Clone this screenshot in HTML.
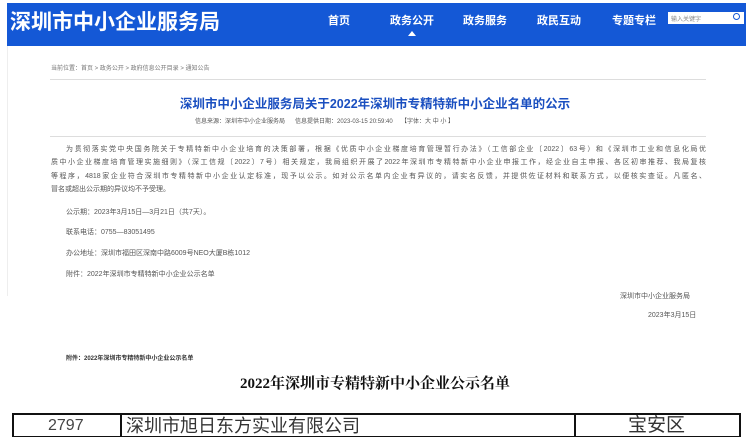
<!DOCTYPE html>
<html><head><meta charset="utf-8"><style>
*{margin:0;padding:0;box-sizing:border-box}
body{width:750px;height:441px;background:#fff;position:relative;overflow:hidden;font-family:"Liberation Sans","Noto Sans CJK SC",sans-serif;color:#333}
.a{position:absolute;white-space:nowrap}
.hdr{position:absolute;left:7px;top:3px;width:739px;height:43px;background:#1458d6}
.logo{left:10px;top:6px;font-size:21px;color:#fff;font-weight:bold}
.nav{top:12px;font-size:11px;color:#fff;font-weight:bold}
.search{left:668px;top:12px;width:76px;height:12px;background:#fff;font-size:6px;color:#888;padding:2px 0 0 3px}
.line{position:absolute;height:1px;background:#ddd;left:50px;width:656px}
.p{font-size:7px;color:#555;line-height:13.5px}
.j{position:absolute;left:51px;width:655px;font-size:7px;color:#555;white-space:nowrap;text-align:justify;text-align-last:justify;overflow:hidden;height:10px;line-height:10px}
</style></head><body>
<div class="hdr"></div>
<div class="a logo">深圳市中小企业服务局</div>
<div class="a nav" style="left:328px">首页</div>
<div class="a nav" style="left:390px">政务公开</div>
<div class="a nav" style="left:463px">政务服务</div>
<div class="a nav" style="left:537px">政民互动</div>
<div class="a nav" style="left:612px">专题专栏</div>
<div class="a" style="left:408px;top:31px;width:0;height:0;border-left:4px solid transparent;border-right:4px solid transparent;border-bottom:5px solid #fff"></div>
<div class="a search">输入关键字<span style="position:absolute;right:4px;top:1px;width:7px;height:7px;border:1.5px solid #1458d6;border-radius:50%"></span></div>
<div style="position:absolute;left:7px;top:46px;width:1px;height:250px;background:#eee"></div>
<div class="a" style="left:51px;top:63px;font-size:6px;color:#777">当前位置：首页 &gt; 政务公开 &gt; 政府信息公开目录 &gt; 通知公告</div>
<div class="line" style="top:79px"></div>
<div class="a" style="left:0;width:750px;text-align:center;top:93px;font-size:12.5px;font-weight:bold;color:#1a4fc0">深圳市中小企业服务局关于2022年深圳市专精特新中小企业名单的公示</div>
<div class="a" style="left:195px;top:116px;font-size:6px;color:#555">信息来源：深圳市中小企业服务局&nbsp;&nbsp;&nbsp;&nbsp;&nbsp;&nbsp;信息提供日期：2023-03-15 20:59:40&nbsp;&nbsp;&nbsp;&nbsp;&nbsp;【字体：大 中 小 】</div>
<div class="line" style="top:136px"></div>
<div class="j" style="top:145px;padding-left:15px">为贯彻落实党中央国务院关于专精特新中小企业培育的决策部署，根据《优质中小企业梯度培育管理暂行办法》（工信部企业〔2022〕63号）和《深圳市工业和信息化局优</div>
<div class="j" style="top:158px">质中小企业梯度培育管理实施细则》（深工信规〔2022〕7号）相关规定，我局组织开展了2022年深圳市专精特新中小企业申报工作，经企业自主申报、各区初审推荐、我局复核</div>
<div class="j" style="top:172px">等程序，4818家企业符合深圳市专精特新中小企业认定标准，现予以公示。如对公示名单内企业有异议的，请实名反馈，并提供佐证材料和联系方式，以便核实查证。凡匿名、</div>
<div class="a p" style="left:51px;top:183px">冒名或超出公示期的异议均不予受理。</div>
<div class="a p" style="left:66px;top:206px">公示期：2023年3月15日—3月21日（共7天）。</div>
<div class="a p" style="left:66px;top:226px">联系电话：0755—83051495</div>
<div class="a p" style="left:66px;top:247px">办公地址：深圳市福田区深南中路6009号NEO大厦B栋1012</div>
<div class="a p" style="left:66px;top:268px">附件：2022年深圳市专精特新中小企业公示名单</div>
<div class="a p" style="left:620px;top:290px">深圳市中小企业服务局</div>
<div class="a p" style="left:648px;top:309px">2023年3月15日</div>
<div class="a" style="left:66px;top:353px;font-size:6px;font-weight:bold;color:#333">附件：2022年深圳市专精特新中小企业公示名单</div>
<div class="a" style="left:0;width:750px;text-align:center;top:372px;font-size:15px;font-weight:bold;color:#111;font-family:'Liberation Serif','Noto Serif CJK SC',serif">2022年深圳市专精特新中小企业公示名单</div>
<div style="position:absolute;left:12px;top:413px;width:729px;height:24px;border:2px solid #111;border-bottom:1px solid #111"></div>
<div style="position:absolute;left:120px;top:413px;width:2px;height:24px;background:#111"></div>
<div style="position:absolute;left:574px;top:413px;width:2px;height:24px;background:#111"></div>
<div class="a" style="left:48px;top:416px;font-size:16px;line-height:20px;color:#444">2797</div>
<div class="a" style="left:126px;top:415px;font-size:18px;line-height:22px;color:#333">深圳市旭日东方实业有限公司</div>
<div class="a" style="left:628px;top:415px;font-size:19px;line-height:22px;color:#333">宝安区</div>
</body></html>
